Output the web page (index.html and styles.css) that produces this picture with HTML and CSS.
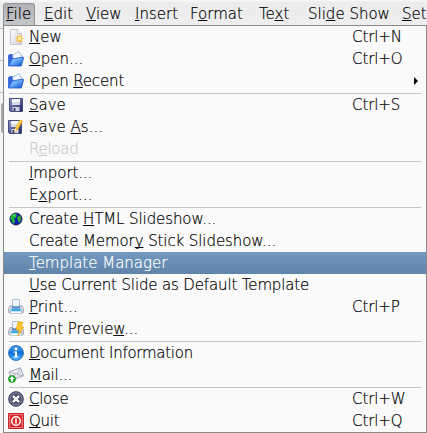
FILE: index.html
```
<!DOCTYPE html>
<html lang="en">
<head>
<meta charset="utf-8">
<title>File menu</title>
<link rel="stylesheet" href="styles.css">
</head>
<body>
<svg class="defs" aria-hidden="true">
  <defs>
    <linearGradient id="blue" x1="0" y1="0" x2="1" y2="1"><stop offset="0" stop-color="#c5e3ff"/><stop offset=".45" stop-color="#69b0fa"/><stop offset="1" stop-color="#0b4ad4"/></linearGradient>
    <linearGradient id="navy" x1="0" y1="0" x2="1" y2="1"><stop offset="0" stop-color="#939dce"/><stop offset="1" stop-color="#1b205a"/></linearGradient>
    <linearGradient id="paper" x1="0" y1="0" x2="1" y2="1"><stop offset="0" stop-color="#fff"/><stop offset="1" stop-color="#d0d2de"/></linearGradient>
    <linearGradient id="info" x1="0" y1="0" x2="0" y2="1"><stop offset="0" stop-color="#4aa5ee"/><stop offset=".5" stop-color="#0f70d8"/><stop offset="1" stop-color="#55bcff"/></linearGradient>
    <symbol id="folder" viewBox="0 0 16 16">
      <path d="M.5 4.5l1-1h3l1 2v9h-5z" fill="#2f66dc" stroke="#1c4cc4" stroke-width=".6"/>
      <path d="M4.5 4.5l6.5-4 4 7-9 4z" fill="#f4f8ff" stroke="#8d9fd0" stroke-width=".7"/>
      <path d="M4 8l11-2 .7.6-2.4 8.4H.6z" fill="url(#blue)" stroke="#1c50cc" stroke-width=".8"/>
    </symbol>
    <symbol id="floppy" viewBox="0 0 16 16">
      <path d="M1.5 1.5h13v13h-12l-1-1z" fill="url(#navy)" stroke="#454d7c"/>
      <path d="M4 2h8v6H4z" fill="#f4f5fb"/><path d="M4 5h8v3H4z" fill="#d4d8ea"/>
      <path d="M4.5 10h7v4h-7z" fill="#d4d7e4"/><path d="M5.5 11h2v3h-2z" fill="#39406e"/>
    </symbol>
    <symbol id="printer" viewBox="0 0 16 16">
      <path d="M4.5.5h7v8h-7z" fill="#eff5fc" stroke="#b4bdd0"/>
      <path d="M2 6.5h2V8h8V6.5h2l1.5 3v4H.5v-4z" fill="#d0d2dc" stroke="#9a9dae" stroke-width=".7"/>
      <path d="M4 7.5h8v2H4z" fill="#4a7cc0"/><path d="M3 11h10l1 3.5H2z" fill="#fff" stroke="#9aa6ba" stroke-width=".6"/>
      <path d="M3.5 10h9l.5 2.2H3z" fill="#35aaf5"/>
    </symbol>
  </defs>
</svg>
<div class="screen">
  <nav class="menubar">
    <span class="open"><u>F</u>ile</span><span><u>E</u>dit</span><span><u>V</u>iew</span><span><u>I</u>nsert</span><span>F<u>o</u>rmat</span><span>Te<u>x</u>t</span><span>Sli<u>d</u>e Show</span><span><u>S</u>et</span>
  </nav>
  <div class="body">
  <aside class="edge"><i></i><i></i><i></i><b></b></aside>
  <main class="menu">
    <div class="item"><svg viewBox="0 0 16 16"><path d="M2.5.5h7l4 4v11h-11z" fill="url(#paper)" stroke="#c3c4ce"/><path d="M9.5.5v4h4" fill="#fff" stroke="#c3c4ce"/><path d="M11.5 5l1 2.2 2.3-.8-.8 2.2 2 1-2 1 .8 2.2-2.3-.6-1 2.2-1.1-2.2-2.2.7.7-2.3-2.1-1 2.1-1-.7-2.2 2.2.8z" fill="#f9c34e"/><circle cx="11.5" cy="9.5" r="1.7" fill="#fff3a2"/></svg><span><u>N</u>ew</span><kbd>Ctrl+N</kbd></div>
    <div class="item"><svg><use href="#folder"/></svg><span><u>O</u>pen...</span><kbd>Ctrl+O</kbd></div>
    <div class="item"><svg><use href="#folder"/></svg><span class="tight">Open <u>R</u>ecent</span><em></em></div>
    <hr>
    <div class="item"><svg><use href="#floppy"/></svg><span><u>S</u>ave</span><kbd>Ctrl+S</kbd></div>
    <div class="item"><svg viewBox="0 0 16 16"><use href="#floppy" x="-1" width="16" height="16"/><path d="M6 13l1-4 5-8.5L15 2l-5.500 9.500z" fill="#f7a51b"/><path d="M7.500 9l5-8 1.200.7-5 8z" fill="#ffdc63"/><path d="M6 13l1-3.700L9.300 11z" fill="#f4dfbc"/></svg><span>Save <u>A</u>s...</span></div>
    <div class="item disabled"><svg></svg><span class="tighter">R<u>e</u>load</span></div>
    <hr>
    <div class="item"><svg></svg><span class="snug"><u>I</u>mport...</span></div>
    <div class="item"><svg></svg><span>E<u>x</u>port...</span></div>
    <hr>
    <div class="item"><svg viewBox="0 0 16 16"><circle cx="8" cy="8" r="6" fill="#0b1fb0" stroke="#20294a"/><path d="M3 5l3-2.500 3 1-1 3-2 1 1 2-1 3.500-2-2V9L2.500 8z" fill="#22b735"/><path d="M11 4l2 2v3l-2 3-1-3-1-2z" fill="#36a72e"/><path d="M4 4l3-1-1 2z" fill="#5be878"/></svg><span class="snug">Create <u>H</u>TML Slideshow...</span></div>
    <div class="item"><svg></svg><span class="snug">Create Memor<u>y</u> Stick Slideshow...</span></div>
    <div class="item selected"><svg></svg><span><u>T</u>emplate Manager</span></div>
    <div class="item"><svg></svg><span class="tight"><u>U</u>se Current Slide as Default Template</span></div>
    <div class="item"><svg><use href="#printer"/></svg><span><u>P</u>rint...</span><kbd>Ctrl+P</kbd></div>
    <div class="item"><svg viewBox="0 0 16 16"><use href="#printer" width="16" height="16"/><path d="M10 1h5l-2 5h3l-6 9 1-6H8z" fill="#fcc52d" stroke="#e8980d" stroke-width=".6"/></svg><span class="snug">Print Previe<u>w</u>...</span></div>
    <hr>
    <div class="item"><svg viewBox="0 0 16 16"><circle cx="8" cy="8" r="7.4" fill="url(#info)" stroke="#2468b4"/><circle cx="8" cy="4" r="1.4" fill="#fff"/><path d="M5.500 6.500H9v5h1.500v1h-5v-1H7v-4H5.500z" fill="#fff"/></svg><span class="tighter"><u>D</u>ocument Information</span></div>
    <div class="item"><svg viewBox="0 0 16 16"><path d="M1 5L12.500.8l3 8L4 13z" fill="url(#paper)" stroke="#a4a5bd"/><path d="M1 5l8 2.200L12.500 1M4 13l3-6m2 0l6 2" fill="none" stroke="#a4a5bd" stroke-width=".7"/><circle cx="4" cy="12" r="3.600" fill="#25ab2b" stroke="#128419" stroke-width=".6"/><path d="M4 9.200L6.600 12H5v2.400H3V12H1.400z" fill="#fff"/></svg><span class="tighter"><u>M</u>ail...</span></div>
    <hr>
    <div class="item"><svg viewBox="0 0 16 16"><circle cx="8" cy="8" r="7.3" fill="#4f516d" stroke="#3c3e58"/><circle cx="8" cy="8" r="6" fill="none" stroke="#9a9cb2" stroke-width=".8"/><path d="M5 5l6 6m0-6l-6 6" stroke="#fff" stroke-width="2.4"/></svg><span class="tighter"><u>C</u>lose</span><kbd>Ctrl+W</kbd></div>
    <div class="item"><svg viewBox="0 0 16 16"><path d="M.5.5h15v15H.5z" fill="#d92a2d" stroke="#c0282c"/><path d="M1.500 1.500h13v13h-13z" fill="none" stroke="#ef7775"/><circle cx="8" cy="8" r="4.300" fill="none" stroke="#fff" stroke-width="1.500"/><path d="M8 5.500v5" stroke="#fff" stroke-width="1.600"/></svg><span class="tighter"><u>Q</u>uit</span><kbd>Ctrl+Q</kbd></div>
  </main>
  </div>
</div>
</body>
</html>
```
FILE: styles.css
```
* { box-sizing: border-box; }
body { margin: 0; background: #f3f3f3; color: #000; font: 200 15px/22px "DejaVu Sans Light", "DejaVu Sans", sans-serif; -webkit-text-stroke: .2px currentColor; overflow: hidden; }
.defs { display: block; width: 0; height: 0; }
.screen { width: 427px; height: 433px; }
.menubar { height: 25px; padding: 3px 0 0 3px; display: grid; grid-template-columns: 38px 42px 49px 55px 69px 49px 94px 30px; background: linear-gradient(#f8f8f8, #ececec 3px, #eee); white-space: nowrap; }
.menubar span { padding-left: 3px; height: 22px; }
.menubar .open { width: 32px; padding-left: 2px; border: 1px solid #929397; border-bottom: 0; border-radius: 3px 3px 0 0; background: linear-gradient(#b1b2b6, #c5c6ca); line-height: 20px; }
u { text-decoration: underline; text-decoration-thickness: 1px; text-underline-offset: 1px; text-decoration-skip-ink: none; }
.body { display: flex; height: 408px; }
.edge { width: 3px; background: #f5f5f5; }
.edge i { display: block; height: 32px; border-bottom: 1px solid #bbb; }
.edge i:first-child { height: 4px; }
.edge b { display: block; width: 2px; height: 30px; margin: 10px 0 0 1px; background: #a9a9ad; border-radius: 3px 0 0 3px; }
.menu { width: 424px; height: 408px; border: 1px solid #8a8a8a; background: #fafafa; }
.item { height: 22px; display: flex; align-items: center; padding-left: 4px; white-space: nowrap; }
.item svg { width: 16px; height: 16px; flex: none; margin-right: 5px; }
.item span { flex: 1; }
.item kbd { font: inherit; width: 74px; letter-spacing: -.08px; }
.item em { width: 4px; height: 8px; margin-right: 8px; background: #000; clip-path: polygon(0 0, 100% 50%, 0 100%); }
.item .snug { letter-spacing: -.09px; }
.item .tight { letter-spacing: -.14px; }
.item .tighter { letter-spacing: -.27px; }
.disabled { color: #c8c8c8; }
.selected { background: linear-gradient(#7399c0, #6083a9); color: #fff; }
hr { height: 1px; margin: 1px 5px 0; border: 0; background: #c4c4c4; }
```
